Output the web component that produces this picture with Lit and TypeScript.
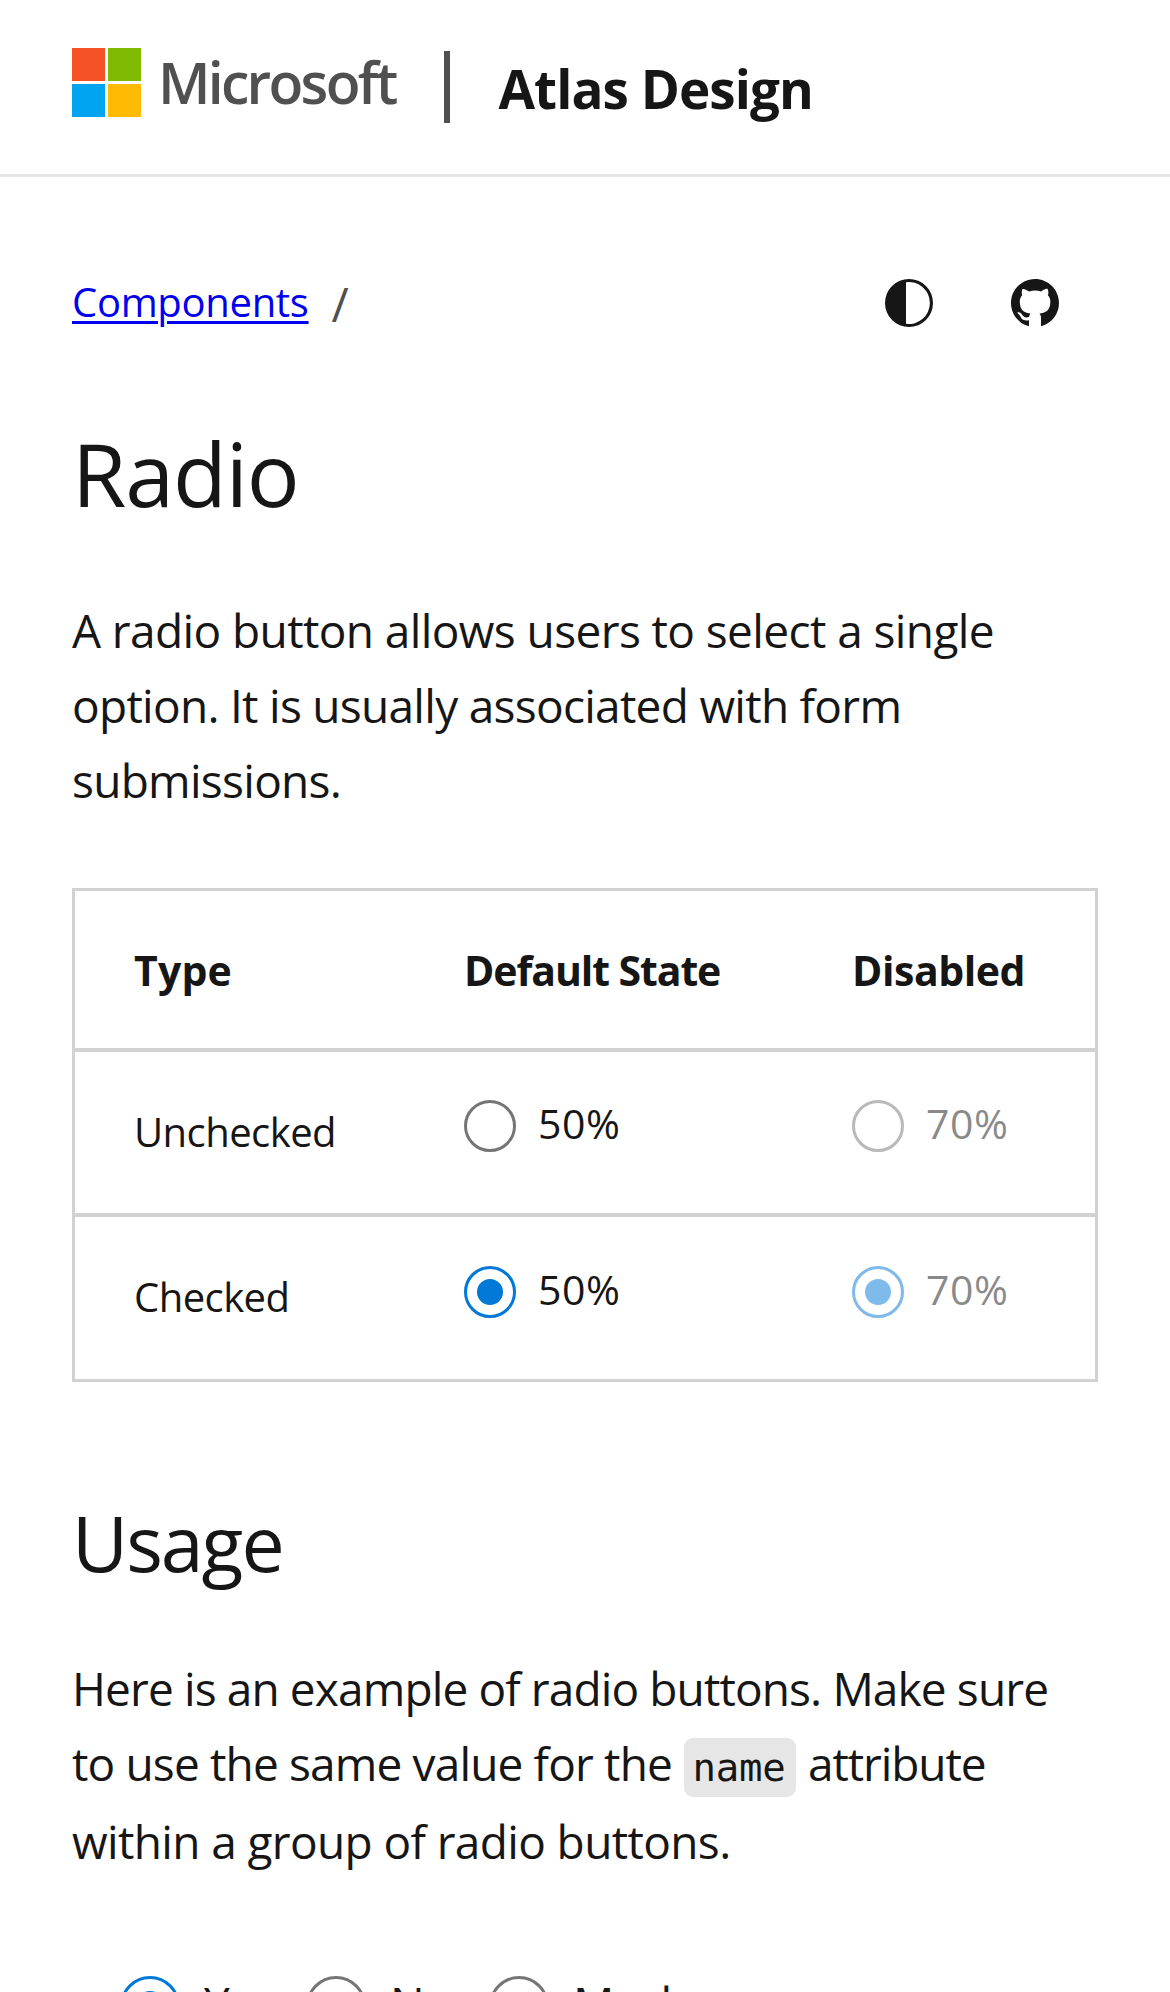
import { LitElement, html, css, nothing } from "lit";
import { customElement, property } from "lit/decorators.js";
import { classMap } from "lit/directives/class-map.js";

@customElement("atlas-radio")
class AtlasRadio extends LitElement {
  @property({ type: Boolean }) checked = false;
  @property({ type: Boolean }) disabled = false;
  @property({ type: Boolean }) large = false;

  static styles = css`
    :host {
      display: block;
    }
    .radio {
      display: flex;
      align-items: flex-start;
      gap: 22px;
      color: #161616;
      font-size: 41px;
      line-height: 60px;
      letter-spacing: 0.6px;
      white-space: nowrap;
    }
    .dot {
      display: flex;
      align-items: center;
      justify-content: center;
      box-sizing: border-box;
      flex: none;
      width: 52px;
      height: 52px;
      border: 3px solid #757575;
      border-radius: 50%;
    }
    .dot-fill {
      width: 26px;
      height: 26px;
      border-radius: 50%;
      background: #0078d7;
    }
    .checked .dot {
      border-color: #0078d7;
    }
    .label {
      margin-top: -7px;
    }
    .disabled {
      opacity: 0.5;
    }
    .large {
      gap: 24px;
      font-size: 46px;
      letter-spacing: -0.8px;
    }
    .large .dot {
      width: 60px;
      height: 60px;
    }
    .large .dot-fill {
      width: 30px;
      height: 30px;
    }
    .large .label {
      margin-top: -3px;
    }
  `;

  render() {
    const classes = {
      radio: true,
      checked: this.checked,
      disabled: this.disabled,
      large: this.large,
    };
    return html`<label class=${classMap(classes)}>
      <span class="dot">${this.checked ? html`<span class="dot-fill"></span>` : nothing}</span>
      <span class="label"><slot></slot></span>
    </label>`;
  }
}

@customElement("app-root")
class AppRoot extends LitElement {
  static styles = css`
    :host {
      display: block;
      box-sizing: border-box;
      height: 1992px;
      overflow: hidden;
      background: #fff;
      color: #161616;
      font-family: "Open Sans", "Noto Sans", sans-serif;
    }
    .header {
      display: flex;
      align-items: flex-start;
      box-sizing: border-box;
      height: 177px;
      padding: 48px 72px 0;
      border-bottom: 3px solid #e6e6e6;
      white-space: nowrap;
    }
    .logo {
      display: grid;
      grid-template-columns: 33px 33px;
      grid-auto-rows: 33px;
      gap: 3px;
    }
    .red { background: #f65125; }
    .green { background: #80bb02; }
    .blue { background: #00a4f0; }
    .yellow { background: #ffba04; }
    .wordmark {
      width: 286px;
      margin: 4px 0 0 17px;
      color: #505050;
      font-size: 57px;
      font-weight: 600;
      line-height: 60px;
      letter-spacing: -2.7px;
    }
    .divider {
      width: 6px;
      height: 72px;
      margin-top: 3px;
      background: #505050;
    }
    .site {
      margin: 11px 0 0 48.5px;
      font-size: 53px;
      font-weight: 700;
      line-height: 60px;
      letter-spacing: -0.95px;
    }
    .main {
      padding: 96px 72px 0;
    }
    .bar {
      display: flex;
      align-items: center;
      height: 60px;
      padding-right: 39px;
    }
    .crumbs {
      display: flex;
      flex: 1;
      gap: 23px;
      margin-top: -1px;
      font-size: 40px;
      line-height: 60px;
      letter-spacing: -0.31px;
    }
    .crumb {
      color: #0000ee;
      text-decoration: underline;
      text-decoration-thickness: 3px;
      text-underline-offset: 4px;
    }
    .slash {
      margin-top: 2px;
      color: #505050;
      font-size: 47px;
    }
    .actions {
      display: flex;
      gap: 78px;
    }
    .icon {
      display: block;
      width: 48px;
      height: 48px;
      fill: #161616;
    }
    h1,
    h2,
    p {
      margin: 0;
      font-weight: 400;
      white-space: nowrap;
    }
    h1 {
      margin-top: 85px;
      font-size: 88px;
      line-height: 110px;
      letter-spacing: -1.1px;
    }
    h2 {
      margin-top: 114px;
      font-size: 77px;
      line-height: 94px;
      letter-spacing: -2.0px;
    }
    p {
      margin-top: 65px;
      font-size: 46px;
      line-height: 75px;
      letter-spacing: -0.6px;
    }
    .line {
      display: block;
    }
    .tight {
      letter-spacing: -0.72px;
    }
    .usage {
      margin-top: 61px;
      letter-spacing: -0.88px;
    }
    .usage .wide {
      margin-top: 3px;
      letter-spacing: -0.63px;
    }
    .with-code {
      display: flex;
      align-items: flex-start;
      gap: 12px;
      letter-spacing: -0.85px;
    }
    .attr {
      letter-spacing: -1.1px;
    }
    .code {
      box-sizing: border-box;
      width: 112px;
      height: 59px;
      margin-top: 12px;
      padding-right: 2px;
      border-radius: 9px;
      background: #e6e6e6;
      font-family: "DejaVu Sans Mono", monospace;
      font-size: 39px;
      line-height: 59px;
      letter-spacing: -0.2px;
      text-align: center;
    }
    .table {
      margin-top: 70px;
      border: 3px solid #d2d2d2;
    }
    .row {
      display: grid;
      grid-template-columns: 329px 388px 1fr;
      box-sizing: border-box;
      font-size: 40px;
      line-height: 60px;
      letter-spacing: -0.55px;
      white-space: nowrap;
    }
    .cell {
      padding: 48px 0 0 60px;
    }
    .name {
      padding: 50px 0 0 59px;
    }
    .row + .row {
      height: 165px;
      border-top: 4px solid #d2d2d2;
    }
    .head {
      height: 157px;
      font-size: 41px;
      font-weight: 700;
      letter-spacing: -0.45px;
    }
    .head .cell {
      padding-top: 49px;
    }
    .head .name {
      padding: 49px 0 0 59px;
      letter-spacing: 0.2px;
    }
    .head .middle {
      letter-spacing: -1.08px;
    }
    .row + .row.last {
      height: 166px;
    }
    .last .cell {
      padding-top: 49px;
    }
    .options {
      display: grid;
      grid-template-columns: 186px 183px 1fr;
      margin-top: 97px;
      padding-left: 48px;
    }
  `;

  private renderRow(type: string, checked: boolean) {
    return html`<div class="row ${checked ? "last" : ""}">
      <div class="name">${type}</div>
      <div class="cell"><atlas-radio ?checked=${checked}>50%</atlas-radio></div>
      <div class="cell"><atlas-radio ?checked=${checked} disabled>70%</atlas-radio></div>
    </div>`;
  }

  render() {
    return html`
      <header class="header">
        <div class="logo">
          <span class="red"></span><span class="green"></span>
          <span class="blue"></span><span class="yellow"></span>
        </div>
        <span class="wordmark">Microsoft</span>
        <span class="divider"></span>
        <span class="site">Atlas Design</span>
      </header>
      <main class="main">
        <div class="bar">
          <nav class="crumbs"><a class="crumb" href="#">Components</a><span class="slash">/</span></nav>
          <div class="actions">
            <svg class="icon" viewBox="0 0 48 48">
              <path fill-rule="evenodd" d="M24 0a24 24 0 1 1 0 48a24 24 0 0 1 0-48zM21 3.2V44.8A21 21 0 1 0 21 3.2z" />
            </svg>
            <svg class="icon" viewBox="0 0 16 16">
              <path d="M8 0C3.58 0 0 3.58 0 8c0 3.54 2.29 6.53 5.47 7.59l.54.15V13.72c-2.01.37-2.53-.49-2.69-.94-.09-.23-.48-.94-.82-1.13-.28-.15-.68-.52-.01-.53.63-.01 1.08.58 1.23.82.72 1.21 1.87.87 2.33.66.07-.52.28-.87.51-1.07-1.78-.2-3.64-.89-3.64-3.95 0-.87.31-1.59.82-2.15-.08-.2-.36-1.02.08-2.12 0 0 .67-.21 2.2.82.64-.18 1.32-.27 2-.27s1.36.09 2 .27c1.53-1.04 2.2-.82 2.2-.82.44 1.1.16 1.92.08 2.12.51.56.82 1.27.82 2.15 0 3.07-1.87 3.75-3.65 3.95.29.25.54.73.54 1.48V15.74l.53-.15A8.01 8.01 0 0 0 16 8c0-4.42-3.58-8-8-8z" />
            </svg>
          </div>
        </div>
        <h1>Radio</h1>
        <p>
          <span class="line">A radio button allows users to select a single</span>
          <span class="line tight">option. It is usually associated with form</span>
          <span class="line tight">submissions.</span>
        </p>
        <div class="table">
          <div class="row head">
            <div class="name">Type</div>
            <div class="cell middle">Default State</div>
            <div class="cell">Disabled</div>
          </div>
          ${this.renderRow("Unchecked", false)} ${this.renderRow("Checked", true)}
        </div>
        <h2>Usage</h2>
        <p class="usage">
          <span class="line">Here is an example of radio buttons. Make sure</span>
          <span class="line with-code"
            ><span>to use the same value for the</span><code class="code">name</code
            ><span class="attr">attribute</span></span
          >
          <span class="line wide">within a group of radio buttons.</span>
        </p>
        <div class="options">
          <atlas-radio large checked>Yes</atlas-radio>
          <atlas-radio large>No</atlas-radio>
          <atlas-radio large>Maybe</atlas-radio>
        </div>
      </main>
    `;
  }
}
